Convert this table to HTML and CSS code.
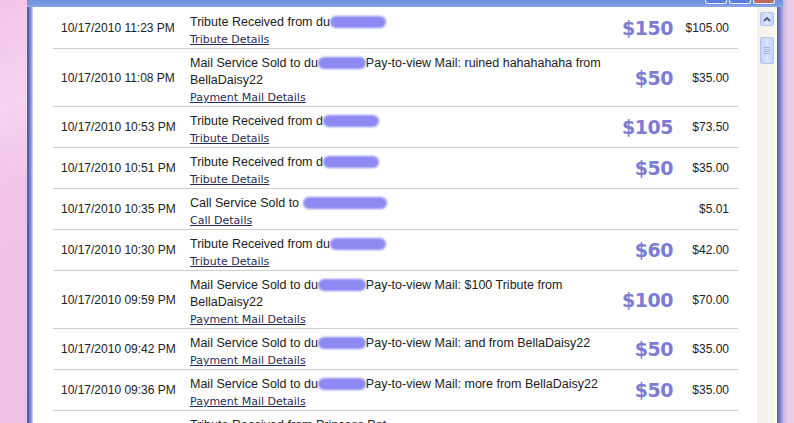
FILE: index.html
```html
<!DOCTYPE html>
<html>
<head>
<meta charset="utf-8">
<link rel="stylesheet" href="styles.css">
</head>
<body>
<div class="desktop">
  <div class="pink-left"></div>
  <div class="window">
    <div class="titlebar">
      <span class="tb-btn"></span><span class="tb-btn"></span><span class="tb-btn close"></span>
    </div>
    <div class="window-body">
      <div class="frame-left"></div>
      <div class="content">
        <div class="row">
          <div class="date">10/17/2010 11:23 PM</div>
          <div class="desc"><div class="line">Tribute Received from du<span class="blob blob-a"></span></div><a class="link">Tribute Details</a></div>
          <div class="big">$150</div>
          <div class="amt">$105.00</div>
        </div>
        <div class="row">
          <div class="date">10/17/2010 11:08 PM</div>
          <div class="desc"><div class="line">Mail Service Sold to du<span class="blob blob-b"></span>Pay-to-view Mail: ruined hahahahaha from BellaDaisy22</div><a class="link">Payment Mail Details</a></div>
          <div class="big">$50</div>
          <div class="amt">$35.00</div>
        </div>
        <div class="row">
          <div class="date">10/17/2010 10:53 PM</div>
          <div class="desc"><div class="line">Tribute Received from d<span class="blob blob-a"></span></div><a class="link">Tribute Details</a></div>
          <div class="big">$105</div>
          <div class="amt">$73.50</div>
        </div>
        <div class="row">
          <div class="date">10/17/2010 10:51 PM</div>
          <div class="desc"><div class="line">Tribute Received from d<span class="blob blob-a"></span></div><a class="link">Tribute Details</a></div>
          <div class="big">$50</div>
          <div class="amt">$35.00</div>
        </div>
        <div class="row">
          <div class="date">10/17/2010 10:35 PM</div>
          <div class="desc"><div class="line">Call Service Sold to <span class="blob blob-c"></span></div><a class="link">Call Details</a></div>
          <div class="big"></div>
          <div class="amt">$5.01</div>
        </div>
        <div class="row">
          <div class="date">10/17/2010 10:30 PM</div>
          <div class="desc"><div class="line">Tribute Received from du<span class="blob blob-a"></span></div><a class="link">Tribute Details</a></div>
          <div class="big">$60</div>
          <div class="amt">$42.00</div>
        </div>
        <div class="row">
          <div class="date">10/17/2010 09:59 PM</div>
          <div class="desc"><div class="line">Mail Service Sold to du<span class="blob blob-b"></span>Pay-to-view Mail: $100 Tribute from BellaDaisy22</div><a class="link">Payment Mail Details</a></div>
          <div class="big">$100</div>
          <div class="amt">$70.00</div>
        </div>
        <div class="row">
          <div class="date">10/17/2010 09:42 PM</div>
          <div class="desc"><div class="line">Mail Service Sold to du<span class="blob blob-b"></span>Pay-to-view Mail: and from BellaDaisy22</div><a class="link">Payment Mail Details</a></div>
          <div class="big">$50</div>
          <div class="amt">$35.00</div>
        </div>
        <div class="row">
          <div class="date">10/17/2010 09:36 PM</div>
          <div class="desc"><div class="line">Mail Service Sold to du<span class="blob blob-b"></span>Pay-to-view Mail: more from BellaDaisy22</div><a class="link">Payment Mail Details</a></div>
          <div class="big">$50</div>
          <div class="amt">$35.00</div>
        </div>
        <div class="row">
          <div class="date">10/17/2010 09:30 PM</div>
          <div class="desc"><div class="line">Tribute Received from Princess Pat</div><a class="link">Tribute Details</a></div>
          <div class="big"></div>
          <div class="amt">$35.00</div>
        </div>
      </div>
      <div class="scrollbar">
        <div class="sb-btn">
          <svg width="8" height="6" viewBox="0 0 8 6"><path d="M1 5 L4 2 L7 5" fill="none" stroke="#4d6185" stroke-width="1.8"/></svg>
        </div>
        <div class="sb-thumb">
          <span class="grip"></span><span class="grip"></span><span class="grip"></span><span class="grip"></span>
        </div>
      </div>
      <div class="frame-right"></div>
    </div>
  </div>
  <div class="pink-right"></div>
</div>
</body>
</html>
```

FILE: styles.css
```css
html, body {
  margin: 0;
  padding: 0;
  overflow: hidden;
}
body {
  width: 794px;
  height: 423px;
  font-family: "Liberation Sans", Arial, sans-serif;
  color: #222;
}
.desktop {
  display: flex;
  height: 423px;
  overflow: hidden;
}
.pink-left {
  width: 27px;
  flex: none;
  background: linear-gradient(160deg, #f3c3e9 0%, #f6d3ef 25%, #f2c2e8 45%, #f0bfe6 100%);
}
.pink-right {
  width: 11px;
  flex: none;
  background: linear-gradient(90deg, #c8b2dc 0%, #e6c8e6 40%, #ebcbe8 100%);
}
.window {
  flex: 1;
  display: flex;
  flex-direction: column;
  min-width: 0;
}
.titlebar {
  height: 7px;
  flex: none;
  display: flex;
  justify-content: flex-end;
  align-items: flex-start;
  gap: 2px;
  padding-right: 8px;
  background: linear-gradient(180deg, #6f8fe0 0%, #7c9ae2 70%, #93abe6 100%);
}
.tb-btn {
  width: 20px;
  height: 3px;
  border: 1px solid #e8eefc;
  border-top: none;
  border-radius: 0 0 3px 3px;
  background: #5a80dc;
}
.tb-btn.close {
  background: #c06a5e;
}
.window-body {
  flex: 1;
  display: flex;
  min-height: 0;
}
.frame-left {
  width: 6px;
  flex: none;
  background: linear-gradient(90deg, #4f54a6 0%, #5d68b8 30%, #7f8fd8 60%, #a9b6ea 85%, #dfe4f6 100%);
}
.frame-right {
  width: 6px;
  flex: none;
  background: linear-gradient(90deg, #5a5c9e 0%, #6c70b6 30%, #8e94d2 70%, #b2a8d8 100%);
}
.content {
  flex: 1;
  background: #fff;
  padding: 1px 19px 0 20px;
  min-width: 0;
}
.row {
  display: grid;
  grid-template-columns: 129px 430px minmax(0, 1fr) 50px;
  align-items: center;
  padding: 0 9px 0 8px;
  border-bottom: 1px solid #cfcfcf;
}
.date {
  font-size: 12px;
  white-space: nowrap;
}
.desc {
  align-self: start;
  padding: 6px 0 1px;
}
.line {
  font-size: 12.5px;
  line-height: 17px;
}
.link {
  display: block;
  margin-top: 1px;
  font-family: "DejaVu Sans", Verdana, sans-serif;
  font-size: 11px;
  line-height: 15px;
  color: #2b2b58;
  text-decoration: underline;
}
.blob {
  display: inline-block;
  height: 12px;
  vertical-align: -2px;
  background: #8c8af2;
  border-radius: 6px;
  filter: blur(0.8px);
}
.blob-a { width: 56px; }
.blob-b { width: 48px; }
.blob-c { width: 84px; }
.big {
  text-align: right;
  padding-right: 6px;
  font-family: "DejaVu Sans", Verdana, sans-serif;
  font-weight: bold;
  font-size: 19px;
  letter-spacing: -0.5px;
  color: #7d7bd4;
  white-space: nowrap;
}
.amt {
  text-align: right;
  font-size: 12px;
  white-space: nowrap;
}
.scrollbar {
  width: 20px;
  flex: none;
  background: linear-gradient(90deg, #f3f1e8 0%, #f7f5ee 70%, #fbfaf6 100%);
  display: flex;
  flex-direction: column;
  align-items: flex-start;
  padding-top: 5px;
  padding-left: 3px;
  box-sizing: border-box;
}
.sb-btn, .sb-thumb {
  width: 14px;
  box-sizing: border-box;
  border: 1px solid #b3c5ee;
  border-radius: 2px;
  background: linear-gradient(90deg, #c6d5f7 0%, #dbe6fc 50%, #c5d4f6 100%);
}
.sb-btn {
  height: 14px;
  display: flex;
  align-items: center;
  justify-content: center;
}
.sb-thumb {
  margin-top: 11px;
  height: 27px;
  display: flex;
  flex-direction: column;
  align-items: center;
  justify-content: center;
  gap: 1px;
}
.grip {
  width: 6px;
  height: 1px;
  background: #9fb2de;
}
```
